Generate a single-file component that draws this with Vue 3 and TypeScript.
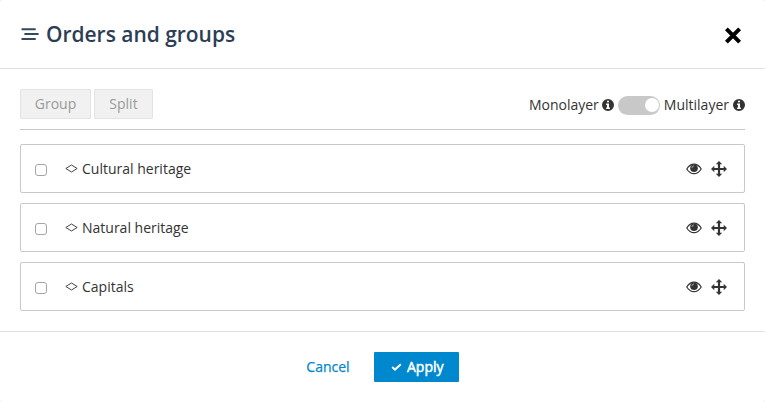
<script setup lang="ts">
import { ref } from 'vue'

interface Layer {
  id: number
  name: string
  selected: boolean
}

const multilayer = ref(true)
const layers = ref<Layer[]>([
  { id: 1, name: 'Cultural heritage', selected: false },
  { id: 2, name: 'Natural heritage', selected: false },
  { id: 3, name: 'Capitals', selected: false },
])

const infoPath =
  'M6 0a6 6 0 1 0 0 12A6 6 0 0 0 6 0ZM5 1.7h2v1.6H5ZM4.1 4.5H7v4h.9V10H4.1V8.5H5V6h-.9Z'
</script>

<template>
  <div class="dialog">
    <header class="header">
      <svg class="title-icon" width="18" height="14" viewBox="0 0 18 14">
        <path d="M.5 2.2h14.2M3.4 7.1h14.2M.5 12.1h14.2" />
      </svg>
      <h1 class="title">Orders and groups</h1>
      <button class="close" type="button" aria-label="Close">
        <svg width="18" height="18" viewBox="0 0 18 18"><path d="M2.4 2.9l13.2 13.2M15.6 2.9L2.4 16.1" /></svg>
      </button>
    </header>

    <main class="body">
      <div class="toolbar">
        <button class="tool group" type="button" disabled>Group</button>
        <button class="tool split" type="button" disabled>Split</button>
        <div class="mode">
          <span class="mono">Monolayer</span>
          <svg class="info" width="12" height="12" viewBox="0 0 12 12"><path fill-rule="evenodd" :d="infoPath" /></svg>
          <button class="switch" :class="{ on: multilayer }" type="button" aria-label="Layer mode" @click="multilayer = !multilayer">
            <span class="knob"></span>
          </button>
          <span class="multi">Multilayer</span>
          <svg class="info" width="12" height="12" viewBox="0 0 12 12"><path fill-rule="evenodd" :d="infoPath" /></svg>
        </div>
      </div>

      <ul class="layers">
        <li v-for="layer in layers" :key="layer.id" class="layer">
          <input v-model="layer.selected" class="check" type="checkbox" :aria-label="layer.name" />
          <svg class="polygon" width="13" height="9" viewBox="0 0 13 9"><path d="M.8 4.5L6.5 1l5.7 3.5L6.5 8Z" /></svg>
          <span class="name">{{ layer.name }}</span>
          <svg class="eye" width="16" height="12" viewBox="0 0 16 12">
            <path class="lid" d="M.8 6C2.6 3.1 5.1 1.2 8 1.2S13.4 3.1 15.2 6C13.4 8.9 10.9 10.7 8 10.7S2.6 8.9.8 6Z" />
            <circle cx="8" cy="5.2" r="3.8" />
            <path class="glint" d="M5.9 5.1A2.1 2.1 0 0 1 8 3" />
          </svg>
          <svg class="move" width="16" height="16" viewBox="0 0 16 16">
            <path d="M8 0l3.2 3.3H9.1v3.6h3.6V4.8L16 8l-3.3 3.2V9.1H9.1v3.6h2.1L8 16l-3.2-3.3h2.1V9.1H3.3v2.1L0 8l3.3-3.2v2.1h3.6V3.3H4.8Z" />
          </svg>
        </li>
      </ul>
    </main>

    <footer class="footer">
      <button class="cancel" type="button">Cancel</button>
      <button class="apply" type="button">
        <svg width="11" height="8" viewBox="0 0 11 8"><path d="M1.2 4L4 6.6l5.8-5.4" /></svg>
        <span>Apply</span>
      </button>
    </footer>
  </div>
</template>

<style>
body {
  background: #e4e4e4;
}
</style>

<style scoped>
* {
  box-sizing: border-box;
}

.dialog {
  display: flex;
  flex-direction: column;
  height: 402px;
  border-radius: 2px;
  background: #fff;
  color: #333;
  font: 14px/20px "Open Sans", sans-serif;
}

button {
  padding: 0;
  border: 0;
  background: none;
  font: inherit;
}

.header {
  display: flex;
  align-items: center;
  height: 69px;
  padding: 0 23px 0 21px;
  border-bottom: 1px solid #e2e2e2;
}

.title-icon {
  margin-right: 7px;
  fill: none;
  stroke: #34495e;
  stroke-width: 2;
}

.title {
  margin: 0;
  color: #2c3e56;
  font-size: 20.95px;
  font-weight: 600;
  line-height: 30px;
}

.close {
  display: flex;
  margin: 2px 0 0 auto;
}

.close svg {
  fill: none;
  stroke: #000;
  stroke-width: 4;
}

.body {
  padding: 20px 20px 0;
}

.toolbar {
  display: flex;
  height: 41px;
  border-bottom: 1px solid #c8c8c8;
}

.tool {
  height: 30px;
  border: 1px solid #e3e3e3;
  border-radius: 1px;
  background: #f1f1f1;
  color: #999;
}

.group {
  width: 71px;
  margin-right: 3px;
}

.split {
  width: 59px;
}

.mode {
  display: flex;
  align-items: center;
  height: 32px;
  margin-left: auto;
}

.info {
  margin-left: 4px;
  fill: #333;
}

.mono + .info {
  margin-left: 3px;
}

.switch {
  display: flex;
  align-items: center;
  width: 42px;
  height: 19px;
  margin: 0 4px;
  padding: 0 1px 0 2px;
  border-radius: 10px;
  background: #c8c8c8;
}

.switch.on {
  justify-content: flex-end;
}

.knob {
  width: 14px;
  height: 14px;
  border-radius: 50%;
  background: #fff;
}

.layers {
  display: grid;
  gap: 10px;
  margin: 14px 0 0;
  padding: 0;
  list-style: none;
}

.layer {
  display: flex;
  align-items: center;
  height: 49px;
  padding: 0 17px 0 14px;
  border: 1px solid #c8c8c8;
  border-radius: 2px;
}

.check {
  width: 12px;
  height: 12px;
  margin: 3px 18px 0 0;
  border: 1px solid #a5a5a5;
  border-radius: 3px;
  background: #fff;
  appearance: none;
}

.check:checked {
  background: #0088ce;
}

.polygon {
  margin-right: 4px;
  fill: none;
  stroke: #444;
  stroke-width: 1;
}

.name {
  margin-right: auto;
}

.eye {
  margin-right: 9px;
  fill: #333;
}

.lid {
  fill: none;
  stroke: #333;
  stroke-width: 1.2;
}

.glint {
  fill: none;
  stroke: #bbb;
  stroke-width: 0.8;
}

.move {
  fill: #333;
}

.footer {
  display: flex;
  align-items: flex-start;
  height: 71px;
  margin-top: 20px;
  padding: 20px 0 0 306px;
  border-top: 1px solid #e2e2e2;
}

.cancel {
  width: 44px;
  height: 30px;
  margin-right: 24px;
  color: #0088ce;
  -webkit-text-stroke: 0.25px currentColor;
}

.apply {
  display: flex;
  align-items: center;
  gap: 5px;
  width: 85px;
  height: 30px;
  padding-left: 17px;
  border-radius: 1px;
  background: #0088ce;
  color: #fff;
  -webkit-text-stroke: 0.5px currentColor;
}

.apply svg {
  fill: none;
  stroke: #fff;
  stroke-width: 2;
}
</style>
